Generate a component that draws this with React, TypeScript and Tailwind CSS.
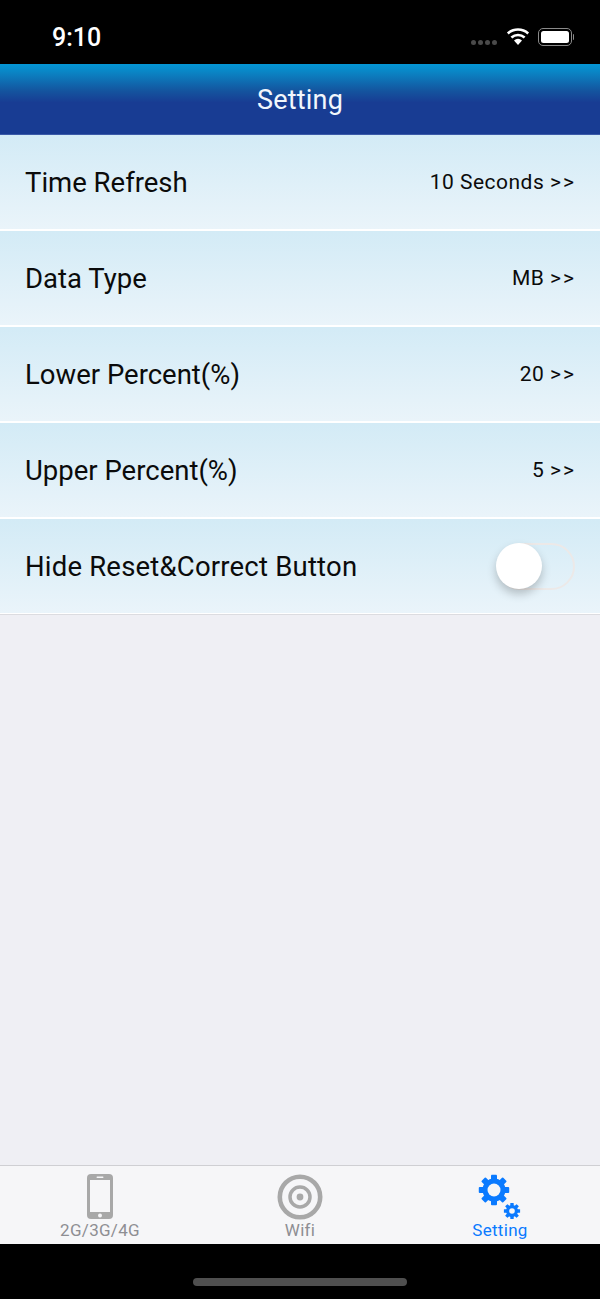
const rows = [
  { label: "Time Refresh", value: "10 Seconds" },
  { label: "Data Type", value: "MB" },
  { label: "Lower Percent(%)", value: "20" },
  { label: "Upper Percent(%)", value: "5" },
];

function Row({ children, label }: { label: React.ReactNode; children: React.ReactNode }) {
  return (
    <div className="h-[96px] pb-[2px] bg-white">
      <div className="h-[94px] flex items-center justify-between pl-[25px] pr-[25px] bg-gradient-to-b from-[#d3ebf6] to-[#eaf4fa]">
        {label}
        {children}
      </div>
    </div>
  );
}

function Gear({ cx, cy, r, hole, tooth }: { cx: number; cy: number; r: number; hole: number; tooth: number }) {
  const angles = [0, 45, 90, 135, 180, 225, 270, 315];
  return (
    <g>
      {angles.map((a) => (
        <rect
          key={a}
          x={cx - tooth / 2}
          y={cy - r - tooth * 0.62}
          width={tooth}
          height={tooth}
          rx={tooth * 0.15}
          fill="#0a7aff"
          transform={`rotate(${a} ${cx} ${cy})`}
        />
      ))}
      <circle cx={cx} cy={cy} r={r} fill="#0a7aff" />
      <circle cx={cx} cy={cy} r={hole} fill="#f6f6f8" />
    </g>
  );
}

export default function App() {
  return (
    <div className="w-[600px] h-[1299px] flex flex-col bg-[#efeff4] font-['Roboto','Liberation_Sans',sans-serif] overflow-hidden">
      <div className="h-[64px] bg-black flex items-start justify-between text-white shrink-0">
        <span className="ml-[52px] mt-[23px] text-[25px] leading-[30px] font-medium">9:10</span>
        <div className="flex items-center mt-[26px] mr-[26px] h-[22px]">
          <div className="flex gap-[2px] mt-[10px] mr-[9px]">
            <span className="w-[5px] h-[5px] rounded-full bg-[#4a4a4a]" />
            <span className="w-[5px] h-[5px] rounded-full bg-[#4a4a4a]" />
            <span className="w-[5px] h-[5px] rounded-full bg-[#4a4a4a]" />
            <span className="w-[5px] h-[5px] rounded-full bg-[#4a4a4a]" />
          </div>
          <svg width="24" height="18" viewBox="0 0 24 18" className="mr-[8px] mb-[2px]">
            <path d="M12 18 L8 13.4 A6 6 0 0 1 16 13.4 Z" fill="#fff" />
            <path d="M5.4 10.5 A10 10 0 0 1 18.6 10.5" fill="none" stroke="#fff" strokeWidth="2.6" />
            <path d="M1.8 6.4 A15.5 15.5 0 0 1 22.2 6.4" fill="none" stroke="#fff" strokeWidth="2.6" />
          </svg>
          <div className="w-[34px] h-[18px] rounded-[5px] border-[1.5px] border-[#8a8a8a] p-[2px] mb-[1px]">
            <div className="w-full h-full rounded-[2.5px] bg-white" />
          </div>
          <span className="w-[1.5px] h-[6px] bg-[#8a8a8a] rounded-r-full ml-[1px]" />
        </div>
      </div>

      <div className="h-[71px] shrink-0 flex items-center justify-center bg-[linear-gradient(to_bottom,#0496d6_0%,#0a84c4_12%,#14559f_38%,#183c93_55%,#183c93_100%)] border-b border-[#3a5aa8]">
        <span className="text-[27px] text-[#f2f7fc] tracking-[0.2px] mt-[2px]">Setting</span>
      </div>

      <div className="shrink-0">
        {rows.map((r) => (
          <Row key={r.label} label={<span className="text-[27.5px] text-[#0b0b0b] mt-[1px]">{r.label}</span>}>
            <span className="text-[21px] text-[#0b0b0b] tracking-[0.5px] mt-[1px] mr-[-1px]">
              {r.value} <span className="tracking-[2px]">{">>"}</span>
            </span>
          </Row>
        ))}
        <Row label={<span className="text-[27.5px] text-[#0b0b0b] tracking-[0.2px] mt-[1px]">Hide Reset&amp;Correct Button</span>}>
          <div className="relative w-[78px] h-[47px] rounded-full border-2 border-[#ece9e8]">
            <div className="absolute left-[-3px] top-[-2px] w-[46px] h-[46px] rounded-full bg-white shadow-[0_5px_10px_rgba(0,0,0,0.22)]" />
          </div>
        </Row>
        <div className="h-[1px] bg-[#dcdce0] -mt-[1px]" />
      </div>

      <div className="flex-1" />

      <div className="h-[79px] shrink-0 bg-[#f6f6f8] border-t border-[#cfcfd3] grid grid-cols-3 text-[17px] tracking-[0.3px]">
        <div className="flex flex-col items-center pt-[8px]">
          <svg width="26" height="45" viewBox="0 0 26 45">
            <rect x="0" y="0" width="26" height="45" rx="4" fill="#a8a8a8" />
            <rect x="3" y="6" width="20" height="32" fill="#f6f6f8" />
            <rect x="9.5" y="2.5" width="7" height="1.5" rx="0.7" fill="#f6f6f8" />
            <circle cx="13" cy="41.5" r="2" fill="#f6f6f8" />
          </svg>
          <span className="text-[#8e8e93] leading-[20px] mt-[1px]">2G/3G/4G</span>
        </div>
        <div className="flex flex-col items-center pt-[8px]">
          <svg width="46" height="46" viewBox="0 0 46 46">
            <circle cx="23" cy="23" r="20.2" fill="none" stroke="#a8a8a8" strokeWidth="4.6" />
            <circle cx="23" cy="23" r="10" fill="none" stroke="#a8a8a8" strokeWidth="3.5" />
            <circle cx="23" cy="23" r="3.4" fill="#a8a8a8" />
          </svg>
          <span className="text-[#8e8e93] leading-[20px]">Wifi</span>
        </div>
        <div className="flex flex-col items-center pt-[8px]">
          <svg width="46" height="46" viewBox="0 0 46 46">
            <Gear cx={17} cy={16} r={11.5} hole={6.5} tooth={6} />
            <Gear cx={35} cy={37} r={6} hole={2.8} tooth={3.4} />
          </svg>
          <span className="text-[#0a7aff] leading-[20px]">Setting</span>
        </div>
      </div>

      <div className="h-[55px] shrink-0 bg-black flex justify-center items-start pt-[34px]">
        <div className="w-[214px] h-[8px] rounded-full bg-[#4f4f4f]" />
      </div>
    </div>
  );
}
